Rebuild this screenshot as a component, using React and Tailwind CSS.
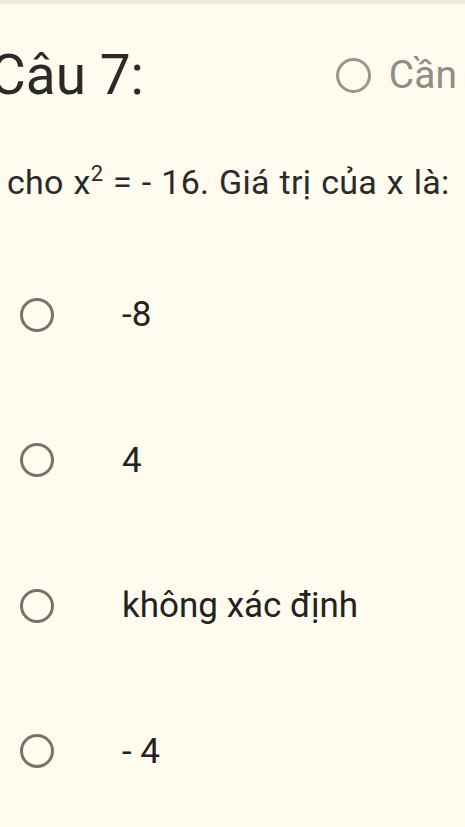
import React from "react";

const options = ["-8", "4", "không xác định", "- 4"];

export default function App() {
  return (
    <div className="min-h-screen w-full bg-[#fffbee] overflow-hidden" style={{ fontFamily: "Roboto, 'Noto Sans', sans-serif" }}>
      <div className="h-[4px] bg-[#eeeadd]" />

      {/* Header */}
      <div className="flex items-center justify-between h-[72px] mt-[35px]">
        <h1 className="ml-[-10px] text-[55px] leading-none text-[#2a2a28] whitespace-nowrap">Câu 7:</h1>
        <div className="flex items-center gap-[18px] pr-[8px]">
          <span className="w-[35px] h-[35px] rounded-full border-[3px] border-[#98978d]" />
          <span className="text-[39px] leading-none text-[#8f8e86]">Cần</span>
        </div>
      </div>

      {/* Question */}
      <p className="mt-[52px] pl-[7px] text-[34px] leading-none tracking-[0.3px] [word-spacing:1px] text-[#2a2a28] whitespace-nowrap">
        cho x<span className="text-[22px] align-[13px]">2</span> = - 16. Giá trị của x là:
      </p>

      {/* Options */}
      <div className="mt-[43px] flex flex-col">
        {options.map((opt) => (
          <div key={opt} className="flex items-center h-[145.5px]">
            <span className="ml-[20px] w-[34px] h-[34px] rounded-full border-[3px] border-[#74746b] shrink-0" />
            <span className="ml-[68px] text-[35px] leading-none text-[#222220]">{opt}</span>
          </div>
        ))}
      </div>
    </div>
  );
}
